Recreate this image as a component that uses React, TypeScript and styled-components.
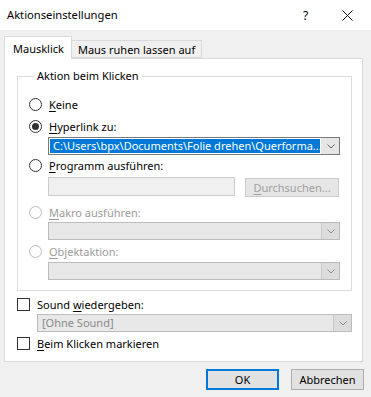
import React from "react";
import styled, { createGlobalStyle } from "styled-components";

const GlobalStyle = createGlobalStyle`
  html, body {
    margin: 0;
    padding: 0;
    background: #f0f0f0;
  }
  body {
    font-family: "Noto Sans", "Open Sans", sans-serif;
    font-size: 11px;
    color: #000;
  }
`;

const Dialog = styled.div`
  width: 371px;
  height: 397px;
  display: flex;
  flex-direction: column;
  background: #f0f0f0;
  overflow: hidden;
`;

const TitleBar = styled.div`
  height: 30px;
  flex: none;
  display: flex;
  align-items: center;
  background: #fff;
  padding-left: 7px;
`;

const Title = styled.span`
  flex: 1;
  font-size: 11.2px;
  line-height: 16px;
`;

const HelpMark = styled.span`
  width: 12px;
  font-size: 12px;
  margin-right: 27px;
`;

const CloseBox = styled.span`
  width: 24px;
  display: flex;
  justify-content: flex-start;
  margin-right: 5px;
`;

const Body = styled.div`
  flex: 1;
  display: flex;
  flex-direction: column;
  padding: 6px 8px 0 4px;
`;

const TabRow = styled.div`
  height: 22px;
  display: flex;
  align-items: flex-end;
`;

const Tab = styled.div<{ $active?: boolean }>`
  position: relative;
  z-index: ${(p) => (p.$active ? 1 : 0)};
  box-sizing: border-box;
  height: ${(p) => (p.$active ? "23px" : "18px")};
  margin-bottom: ${(p) => (p.$active ? "-1px" : "0")};
  padding: ${(p) => (p.$active ? "0 7px 0 8px" : "0 6px")};
  display: flex;
  align-items: center;
  background: ${(p) => (p.$active ? "#fff" : "#f0f0f0")};
  border: 1px solid #d9d9d9;
  border-bottom: ${(p) => (p.$active ? "none" : "1px solid #d9d9d9")};
  border-left: ${(p) => (p.$active ? "1px solid #d9d9d9" : "none")};
  white-space: nowrap;
`;

const Panel = styled.div`
  box-sizing: border-box;
  height: 304px;
  background: #fff;
  border: 1px solid #d9d9d9;
  padding: 0 10px 0 12px;
  display: flex;
  flex-direction: column;
`;

const Group = styled.fieldset`
  margin: 9px 0 0;
  padding: 12px 11px 10px 11px;
  border: 1px solid #dcdcdc;
  display: flex;
  flex-direction: column;
  min-width: 0;
`;

const Legend = styled.legend`
  margin-left: 5px;
  padding: 0 3px;
  line-height: 16px;
`;

const OptionRow = styled.div<{ $mt?: number; $disabled?: boolean }>`
  height: 16px;
  display: flex;
  align-items: center;
  gap: 7px;
  margin-top: ${(p) => p.$mt ?? 0}px;
  color: ${(p) => (p.$disabled ? "#9b9b9b" : "#000")};
  white-space: nowrap;
`;

const Radio = styled.span<{ $checked?: boolean; $disabled?: boolean }>`
  box-sizing: border-box;
  width: 13px;
  height: 13px;
  border-radius: 50%;
  border: 1px solid ${(p) => (p.$disabled ? "#bcbcbc" : "#333")};
  background: #fff;
  display: flex;
  align-items: center;
  justify-content: center;
  flex: none;
  &::after {
    content: "";
    width: 7px;
    height: 7px;
    border-radius: 50%;
    background: #333;
    display: ${(p) => (p.$checked ? "block" : "none")};
  }
`;

const Check = styled.span`
  box-sizing: border-box;
  width: 13px;
  height: 13px;
  border: 1px solid #333;
  background: #fff;
  flex: none;
`;

const Key = styled.span`
  text-decoration: underline;
  text-underline-offset: 2px;
`;

const Combo = styled.div<{ $mt?: number; $indent: number; $enabled?: boolean }>`
  box-sizing: border-box;
  height: 18px;
  margin-top: ${(p) => p.$mt ?? 0}px;
  margin-left: ${(p) => p.$indent}px;
  display: flex;
  border: 1px solid ${(p) => (p.$enabled ? "#7a7a7a" : "#bcbcbc")};
  background: ${(p) => (p.$enabled ? "#fff" : "#e8e8e8")};
`;

const ComboText = styled.div<{ $selected?: boolean; $muted?: boolean }>`
  flex: 1;
  min-width: 0;
  margin: 1px;
  padding-left: 3px;
  display: flex;
  align-items: center;
  line-height: 14px;
  white-space: nowrap;
  background: ${(p) => (p.$selected ? "#0078d7" : "transparent")};
  color: ${(p) => (p.$selected ? "#fff" : p.$muted ? "#8a8a8a" : "#000")};
`;

const DropButton = styled.div<{ $enabled?: boolean }>`
  width: 17px;
  flex: none;
  display: flex;
  align-items: center;
  justify-content: center;
  background: ${(p) => (p.$enabled ? "#e5e5e5" : "#dcdcdc")};
  border-left: 1px solid ${(p) => (p.$enabled ? "#e5e5e5" : "#c8c8c8")};
`;

const ProgramLine = styled.div`
  margin-top: 4px;
  margin-left: 19px;
  height: 20px;
  display: flex;
  align-items: flex-start;
  gap: 10px;
`;

const TextBox = styled.div`
  box-sizing: border-box;
  width: 187px;
  height: 19px;
  border: 1px solid #cccccc;
  background: #f0f0f0;
`;

const BrowseButton = styled.div`
  box-sizing: border-box;
  width: 94px;
  height: 19px;
  margin-top: 1px;
  border: 1px solid #cccccc;
  background: #e6e6e6;
  color: #a0a0a0;
  display: flex;
  align-items: center;
  justify-content: center;
`;

const Footer = styled.div`
  display: flex;
  justify-content: flex-end;
  gap: 12px;
  margin-top: 7px;
  margin-right: -1px;
`;

const Button = styled.div<{ $default?: boolean }>`
  box-sizing: border-box;
  width: 73px;
  height: 21px;
  display: flex;
  align-items: center;
  justify-content: center;
  background: #e1e1e1;
  border: ${(p) => (p.$default ? "2px solid #0078d7" : "1px solid #adadad")};
`;

const Chevron = ({ color = "#606060" }: { color?: string }) => (
  <svg width="8" height="5" viewBox="0 0 8 5">
    <path d="M0.5 0.5 L4 4 L7.5 0.5" fill="none" stroke={color} strokeWidth="1" />
  </svg>
);

const CloseIcon = () => (
  <svg width="11" height="11" viewBox="0 0 11 11">
    <path d="M0.5 0.5 L10.5 10.5 M10.5 0.5 L0.5 10.5" stroke="#111" strokeWidth="1" />
  </svg>
);

export default function App() {
  return (
    <>
      <GlobalStyle />
      <Dialog>
        <TitleBar>
          <Title>Aktionseinstellungen</Title>
          <HelpMark>?</HelpMark>
          <CloseBox>
            <CloseIcon />
          </CloseBox>
        </TitleBar>
        <Body>
          <TabRow>
            <Tab $active>Mausklick</Tab>
            <Tab>Maus ruhen lassen auf</Tab>
          </TabRow>
          <Panel>
            <Group>
              <Legend>Aktion beim Klicken</Legend>
              <OptionRow>
                <Radio />
                <span>
                  <Key>K</Key>eine
                </span>
              </OptionRow>
              <OptionRow $mt={6}>
                <Radio $checked />
                <span>
                  <Key>H</Key>yperlink zu:
                </span>
              </OptionRow>
              <Combo $mt={3} $indent={19} $enabled>
                <ComboText $selected>
                  C:\Users\bpx\Documents\Folie drehen\Querforma...
                </ComboText>
                <DropButton $enabled>
                  <Chevron />
                </DropButton>
              </Combo>
              <OptionRow $mt={2}>
                <Radio />
                <span>
                  <Key>P</Key>rogramm ausführen:
                </span>
              </OptionRow>
              <ProgramLine>
                <TextBox />
                <BrowseButton>
                  <span>
                    <Key>D</Key>urchsuchen...
                  </span>
                </BrowseButton>
              </ProgramLine>
              <OptionRow $mt={7} $disabled>
                <Radio $disabled />
                <span>
                  <Key>M</Key>akro ausführen:
                </span>
              </OptionRow>
              <Combo $mt={2} $indent={19}>
                <ComboText />
                <DropButton>
                  <Chevron color="#8a8a8a" />
                </DropButton>
              </Combo>
              <OptionRow $mt={3} $disabled>
                <Radio $disabled />
                <span>
                  <Key>O</Key>bjektaktion:
                </span>
              </OptionRow>
              <Combo $mt={3} $indent={19}>
                <ComboText />
                <DropButton>
                  <Chevron color="#8a8a8a" />
                </DropButton>
              </Combo>
            </Group>
            <OptionRow $mt={5}>
              <Check />
              <span>
                Sound <Key>w</Key>iedergeben:
              </span>
            </OptionRow>
            <Combo $mt={2} $indent={20}>
              <ComboText $muted>[Ohne Sound]</ComboText>
              <DropButton>
                <Chevron color="#8a8a8a" />
              </DropButton>
            </Combo>
            <OptionRow $mt={3}>
              <Check />
              <span>
                <Key>B</Key>eim Klicken markieren
              </span>
            </OptionRow>
          </Panel>
          <Footer>
            <Button $default>OK</Button>
            <Button>Abbrechen</Button>
          </Footer>
        </Body>
      </Dialog>
    </>
  );
}
